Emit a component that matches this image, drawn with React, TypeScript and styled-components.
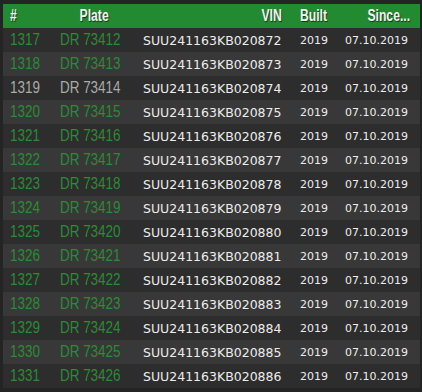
import React from "react";
import styled, { createGlobalStyle } from "styled-components";

const Global = createGlobalStyle`
  html, body { margin: 0; padding: 0; background: #242424; }
  body { width: 422px; height: 392px; overflow: hidden; }
`;

const Frame = styled.div`
  padding: 4px 2px 4px 3px;
  background: #242424;
  height: 392px;
  box-sizing: border-box;
`;

const Table = styled.table`
  border-collapse: collapse;
  table-layout: fixed;
  width: 417px;
`;

const HeadRow = styled.tr`
  background: #228a31;
  height: 24px;
`;

const Th = styled.th<{ $align?: string; $pr?: number }>`
  text-align: ${(p) => p.$align || "left"};
  padding: 0 ${(p) => p.$pr ?? 7}px 0 7px;
  height: 24px;
  line-height: 24px;
  white-space: nowrap;
`;

/* condensed look: the page has no narrow face, so the sans is squeezed */
const HeadLabel = styled.span<{ $origin?: string }>`
  display: inline-block;
  font-family: "Liberation Sans", Arial, sans-serif;
  font-size: 16px;
  font-weight: 700;
  color: #f2f2f2;
  text-shadow: 1px 1px 1px rgba(0, 0, 0, 0.6);
  transform: scaleX(0.76);
  transform-origin: ${(p) => p.$origin || "left"} center;
`;

const Row = styled.tr<{ $alt: boolean }>`
  background: ${(p) => (p.$alt ? "#383838" : "#2d2d2d")};
  height: 24px;
`;

const NarrowCell = styled.td`
  padding: 0 0 0 7px;
  height: 24px;
  line-height: 24px;
  white-space: nowrap;
`;

const NarrowText = styled.span<{ $muted: boolean }>`
  display: inline-block;
  font-family: "Liberation Sans", Arial, sans-serif;
  font-size: 17px;
  font-weight: 400;
  color: ${(p) => (p.$muted ? "#a9aba9" : "#2a8c33")};
  transform: scaleX(0.79);
  transform-origin: left center;
`;

const VinCell = styled.td`
  font-family: "DejaVu Sans", Verdana, sans-serif;
  font-size: 12.5px;
  color: #ececec;
  padding: 0 0 0 7px;
  height: 24px;
  white-space: nowrap;
`;

const SmallCell = styled.td`
  font-family: "DejaVu Sans", Verdana, sans-serif;
  font-size: 11px;
  color: #ececec;
  padding: 0 0 0 7px;
  height: 24px;
  white-space: nowrap;
`;

const rows = Array.from({ length: 15 }, (_, i) => ({
  id: 1317 + i,
  plate: `DR ${73412 + i}`,
  vin: `SUU241163KB0208${72 + i}`,
  built: "2019",
  since: "07.10.2019",
}));

export default function App() {
  return (
    <>
      <Global />
      <Frame>
        <Table>
          <colgroup>
            <col style={{ width: 50 }} />
            <col style={{ width: 83 }} />
            <col style={{ width: 157 }} />
            <col style={{ width: 45 }} />
            <col style={{ width: 82 }} />
          </colgroup>
          <thead>
            <HeadRow>
              <Th><HeadLabel>#</HeadLabel></Th>
              <Th $align="center"><HeadLabel $origin="center">Plate</HeadLabel></Th>
              <Th $align="right" $pr={11}><HeadLabel $origin="right">VIN</HeadLabel></Th>
              <Th><HeadLabel>Built</HeadLabel></Th>
              <Th $align="right" $pr={10}><HeadLabel $origin="right">Since...</HeadLabel></Th>
            </HeadRow>
          </thead>
          <tbody>
            {rows.map((r, i) => (
              <Row key={r.id} $alt={i % 2 === 1}>
                <NarrowCell><NarrowText $muted={r.id === 1319}>{r.id}</NarrowText></NarrowCell>
                <NarrowCell><NarrowText $muted={r.id === 1319}>{r.plate}</NarrowText></NarrowCell>
                <VinCell>{r.vin}</VinCell>
                <SmallCell>{r.built}</SmallCell>
                <SmallCell>{r.since}</SmallCell>
              </Row>
            ))}
          </tbody>
        </Table>
      </Frame>
    </>
  );
}
